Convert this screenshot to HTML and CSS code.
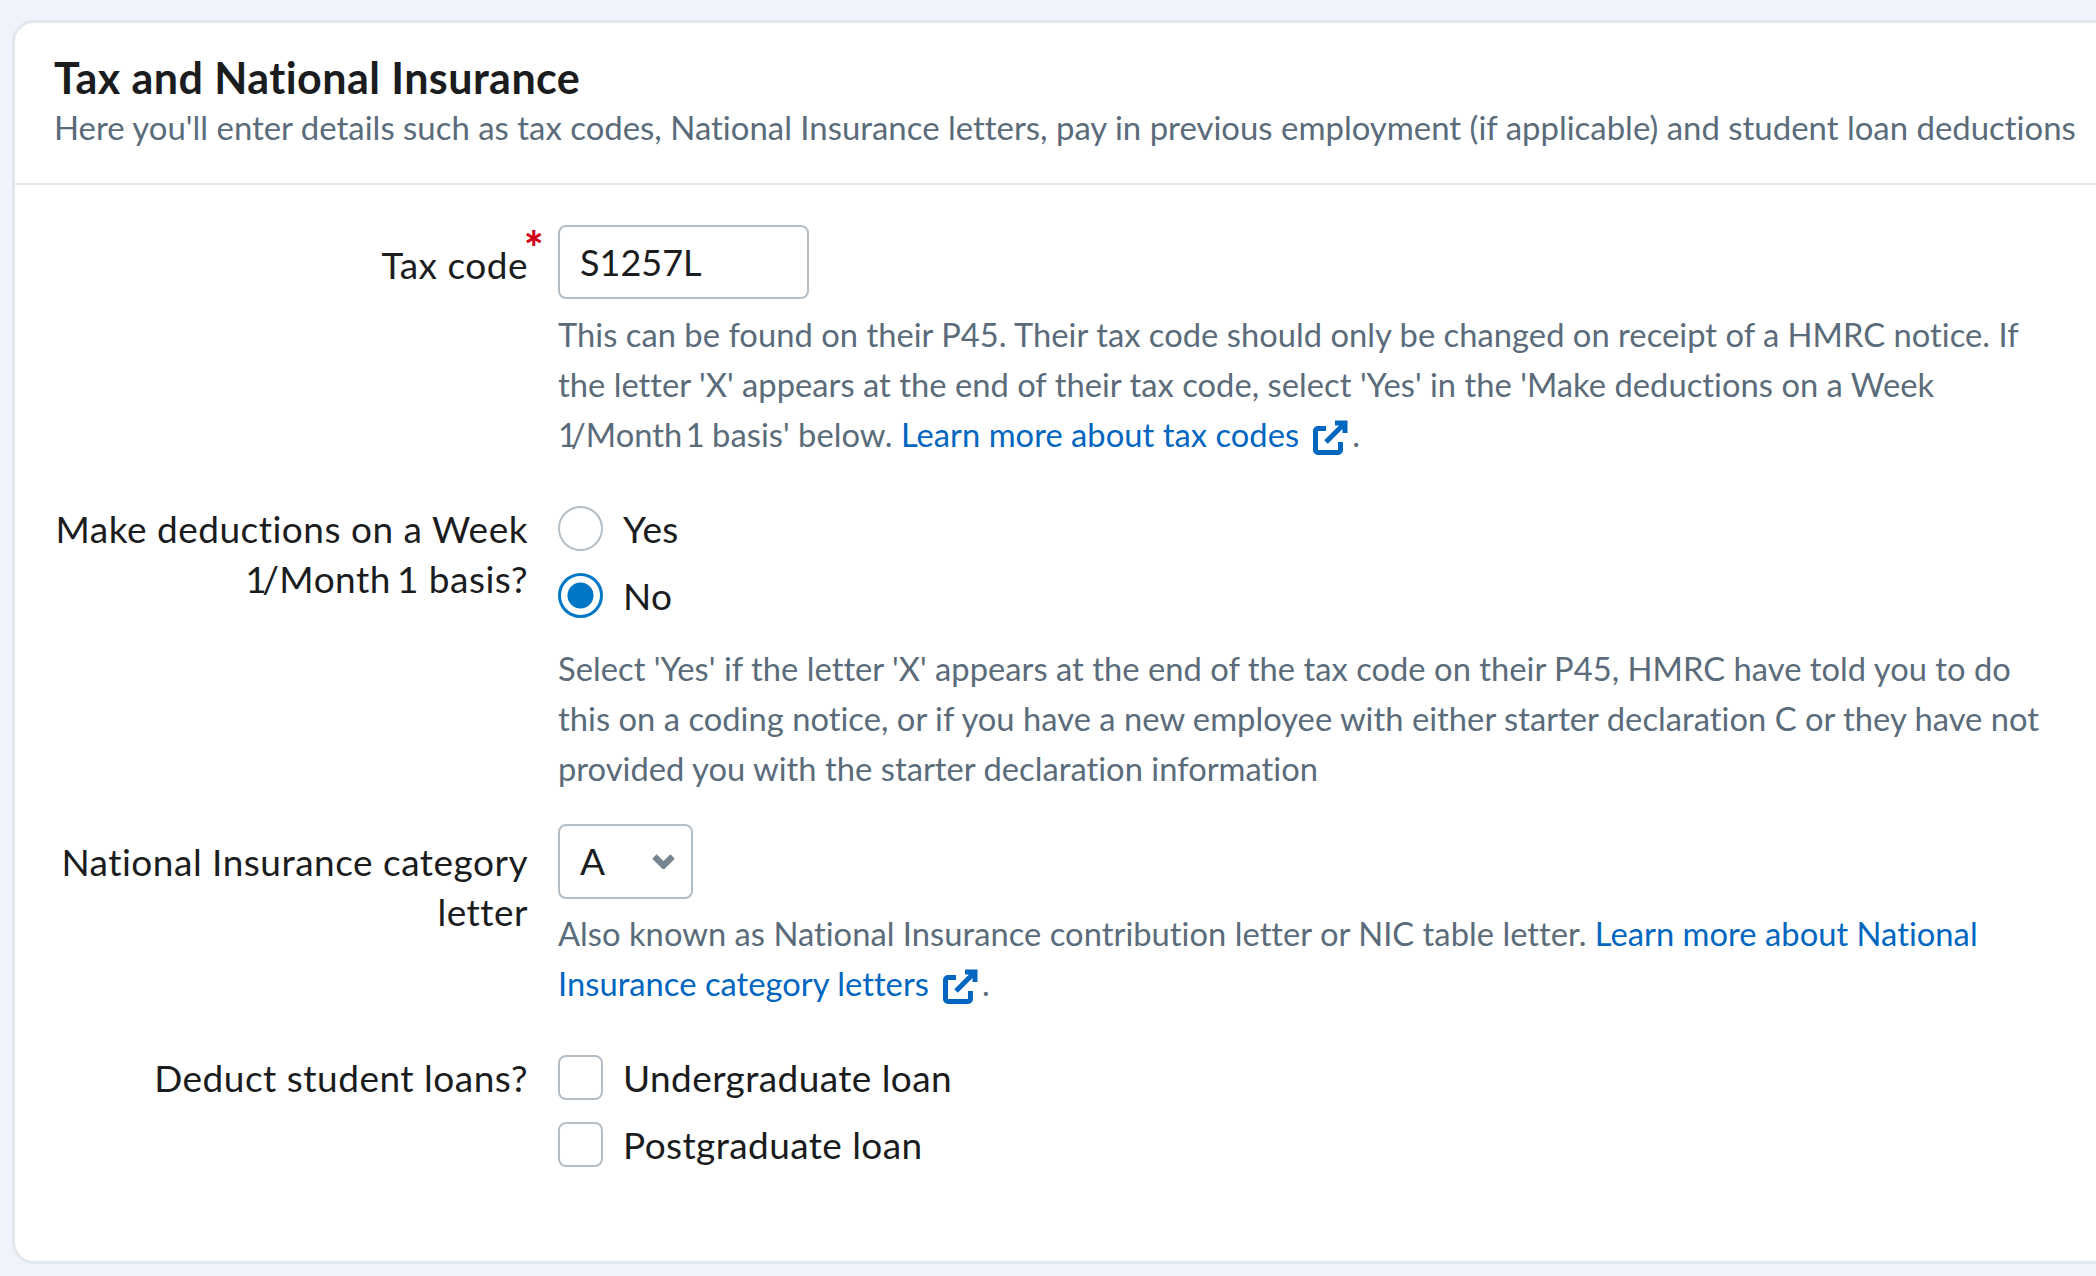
FILE: index.html
```html
<!DOCTYPE html>
<html lang="en">
<head>
<meta charset="utf-8">
<title>Tax and National Insurance</title>
<link rel="stylesheet" href="styles.css">
</head>
<body>
<section class="card">
  <header class="card-head">
    <h2 class="title">Tax and National Insurance</h2>
    <p class="subtitle">Here you'll enter details such as tax codes, National Insurance letters, pay in previous employment (if applicable) and student loan deductions</p>
  </header>
  <form class="form">
    <div class="row row-tax">
      <label class="label label-offset"><span class="req">Tax code<span class="star">*</span></span></label>
      <div class="field">
        <input class="text-input" type="text" value="S1257L">
        <p class="help help-after-input">This can be found on their P45. Their tax code should only be changed on receipt of a HMRC notice. If the letter 'X' appears at the end of their tax code, select 'Yes' in the 'Make deductions on a Week <span class="one-start">1</span>/Month <span class="one-mid">1</span> basis' below. <a class="link" href="#">Learn more about tax codes<svg class="ext" viewBox="0 0 35 35"><path d="M13 8.500H5a2.500 2.500 0 0 0-2.500 2.500V30A2.500 2.500 0 0 0 5 32.500H25a2.500 2.500 0 0 0 2.500-2.500V22"/><path d="M32 3 13 22M22 3H32V13"/></svg></a>.</p>
      </div>
    </div>
    <div class="row row-week">
      <div class="label label-raise">Make deductions on a Week <span class="one-start">1</span>/Month <span class="one-mid">1</span> basis?</div>
      <div class="field">
        <label class="option"><input class="radio" type="radio" name="week"><span>Yes</span></label>
        <label class="option"><input class="radio" type="radio" name="week" checked><span>No</span></label>
        <p class="help help-after-options">Select 'Yes' if the letter 'X' appears at the end of the tax code on their P45, HMRC have told you to do this on a coding notice, or if you have a new employee with either starter declaration C or they have not provided you with the starter declaration information</p>
      </div>
    </div>
    <div class="row row-ni">
      <label class="label label-offset label-offset-ni">National Insurance category letter</label>
      <div class="field">
        <div class="select-wrap">
          <select class="select"><option>A</option><option>B</option><option>C</option></select>
          <svg class="chevron" viewBox="0 0 22 14"><path d="M3 3 11 11 19 3"/></svg>
        </div>
        <p class="help help-after-select">Also known as National Insurance contribution letter or NIC table letter. <a class="link" href="#">Learn more about National Insurance category letters<svg class="ext" viewBox="0 0 35 35"><path d="M13 8.500H5a2.500 2.500 0 0 0-2.500 2.500V30A2.500 2.500 0 0 0 5 32.500H25a2.500 2.500 0 0 0 2.500-2.500V22"/><path d="M32 3 13 22M22 3H32V13"/></svg></a>.</p>
      </div>
    </div>
    <div class="row row-loans">
      <div class="label label-raise">Deduct student loans?</div>
      <div class="field">
        <label class="option"><input class="check" type="checkbox"><span>Undergraduate loan</span></label>
        <label class="option"><input class="check" type="checkbox"><span>Postgraduate loan</span></label>
      </div>
    </div>
  </form>
</section>
</body>
</html>
```
FILE: styles.css
```css
* { box-sizing: border-box; }
html, body { height: 100%; }
body {
  margin: 0;
  height: 1276px;
  overflow: hidden;
  padding: 20px 0 0 12px;
  background: #eff4fc;
  font-family: "Lato", "Noto Sans", sans-serif;
  color: #1a1c1e;
}
.card {
  width: 2200px;
  height: 1244px;
  background: #fff;
  border: 3px solid #e2e7ec;
  border-radius: 22px;
}
.card-head {
  padding: 30px 0 30px 39px;
  border-bottom: 2px solid #e2e7ec;
  height: 162px;
}
.title {
  margin: 0;
  font-size: 43px;
  font-weight: 700;
  letter-spacing: 0.45px;
  line-height: 50px;
}
.subtitle {
  margin: 0;
  font-size: 32.9px;
  letter-spacing: 0.012px;
  line-height: 50px;
  color: #5a6b7a;
  white-space: nowrap;
}
.form { padding-top: 40px; }
.row { display: flex; }
.row-week { margin-top: 46px; }
.row-ni { margin-top: 30px; }
.row-loans { margin-top: 46px; }
.label {
  flex: none;
  width: 513px;
  text-align: right;
  font-size: 37px;
  letter-spacing: 0.5px;
  line-height: 50px;
  padding-left: 20px;
}
.label-raise { margin-top: -2px; }
.label-offset { padding-top: 15px; }
.label-offset-ni { padding-top: 13px; }
.one-start { margin-right: -6px; }
.one-mid { margin: 0 -1px 0 -5px; }
.label .one-start { margin-right: -5px; }
.label .one-mid { margin: 0 0 0 -4px; }
.req { position: relative; }
.star {
  position: absolute;
  left: 100%;
  margin-left: -4px;
  top: -17px;
  color: #d0021b;
  font-weight: 900;
  font-size: 46px;
  line-height: 46px;
}
.field { margin-left: 30px; width: 1490px; }
.text-input {
  display: block;
  width: 251px;
  height: 74px;
  padding: 0 20px;
  border: 2px solid #b5bdc5;
  border-radius: 8px;
  font: inherit;
  font-size: 36px;
  color: #1a1c1e;
  background: #fff;
}
.help {
  margin: 0;
  font-size: 32.7px;
  letter-spacing: 0.03px;
  line-height: 50px;
  color: #5a6b7a;
}
.help-after-input { margin-top: 11px; }
.help-after-select { margin-top: 10px; }
.help-after-options { margin-top: 26px; }
.link { color: #0066c0; text-decoration: none; }
.ext {
  width: 35px;
  height: 35px;
  margin-left: 14px;
  margin-right: 4px;
  vertical-align: -8px;
  fill: none;
  stroke: #0066c0;
  stroke-width: 5;
}
.option {
  display: flex;
  align-items: center;
  gap: 20px;
  height: 45px;
  font-size: 37px;
  letter-spacing: 0.4px;
  margin-bottom: 22px;
}
.option:last-of-type { margin-bottom: 0; }
.radio, .check {
  appearance: none;
  flex: none;
  margin: 0;
  width: 45px;
  height: 45px;
  background: #fff;
  border: 2px solid #b5bdc5;
}
.radio { border-radius: 50%; }
.check { border-radius: 8px; }
.radio:checked {
  border: 3px solid #0077c5;
  background: radial-gradient(circle, #0077c5 0 12.5px, #fff 13.5px);
}
.select-wrap { position: relative; width: 135px; }
.select {
  display: block;
  appearance: none;
  width: 135px;
  height: 75px;
  padding: 0 20px 3px;
  border: 2px solid #b5bdc5;
  border-radius: 8px;
  background: #fff;
  font: inherit;
  font-size: 37px;
  color: #1a1c1e;
}
.chevron {
  position: absolute;
  right: 17px;
  top: 29px;
  width: 25px;
  height: 16px;
  fill: none;
  stroke: #76858f;
  stroke-width: 5.5;
  pointer-events: none;
}
```
